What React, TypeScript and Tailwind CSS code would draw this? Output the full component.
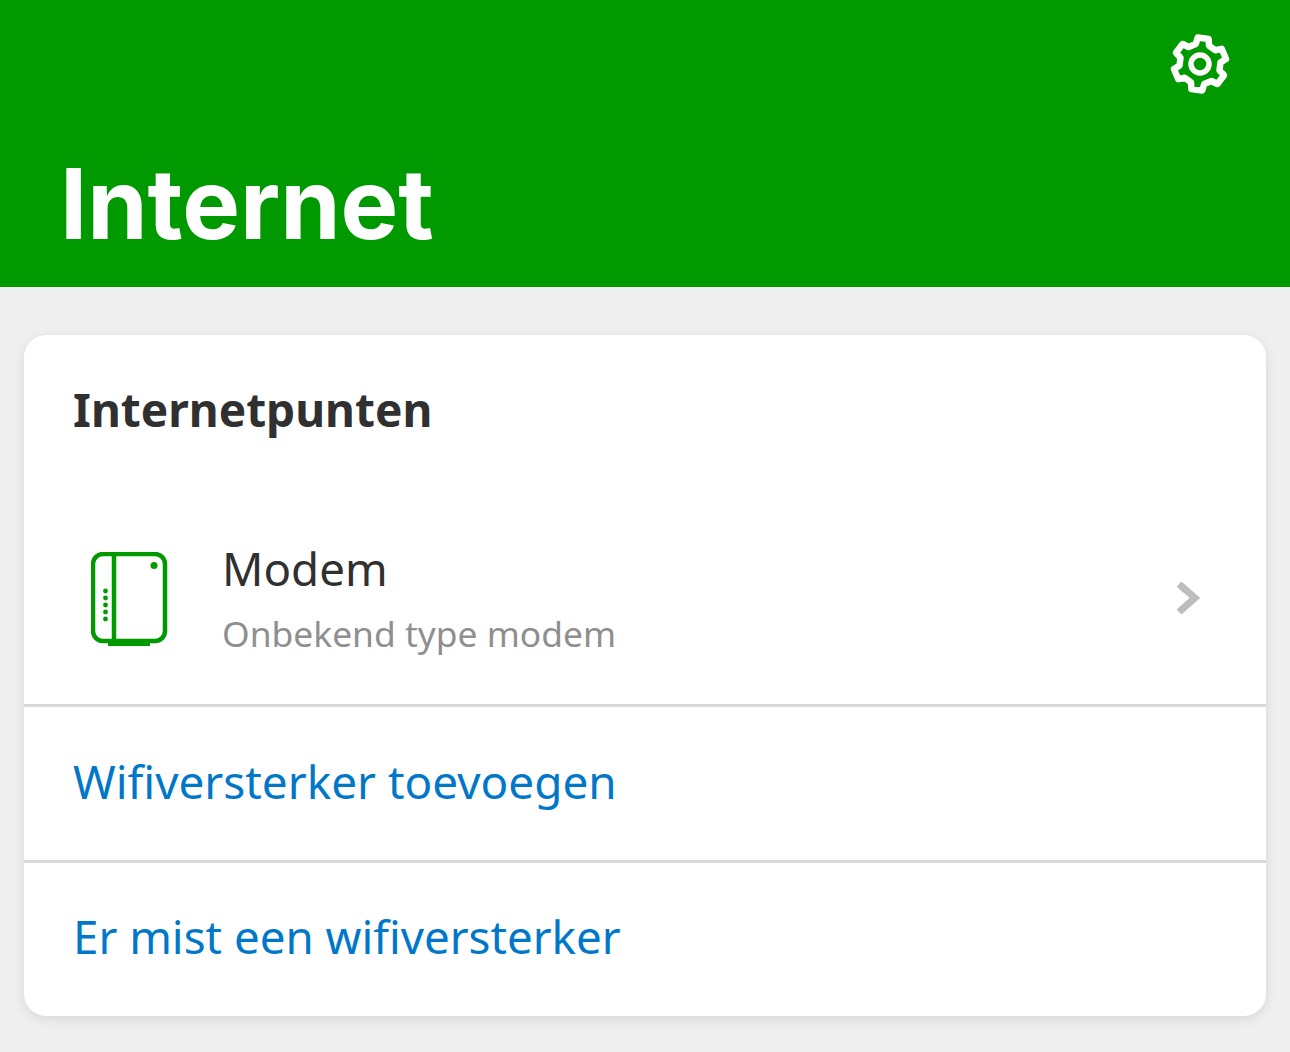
function GearIcon() {
  // 6 teeth, slightly rotated like the original glyph
  const angles = [83, 23, -37, -97, -157, 143]
  const pt = (deg: number, r: number) => {
    const a = (deg * Math.PI) / 180
    return `${(32 + r * Math.cos(a)).toFixed(2)} ${(32 - r * Math.sin(a)).toFixed(2)}`
  }
  const d =
    angles
      .map((a, i) => `${i === 0 ? "M" : "L"}${pt(a + 19, 20.5)} L${pt(a + 12, 26.5)} L${pt(a - 12, 26.5)} L${pt(a - 19, 20.5)}`)
      .join(" ") + " Z"

  return (
    <svg width="64" height="64" viewBox="0 0 64 64" fill="none" stroke="white" strokeLinejoin="round">
      <path d={d} strokeWidth="6.5" />
      <circle cx="32" cy="32" r="9" strokeWidth="5.5" />
    </svg>
  )
}

function ModemIcon() {
  return (
    <svg width="78" height="94" viewBox="0 0 78 94" fill="none" className="mt-[2px] text-[#009900]">
      <rect x="2" y="2" width="72" height="87" rx="10" stroke="currentColor" strokeWidth="4.5" />
      <path d="M23 2v87" stroke="currentColor" strokeWidth="4.5" />
      <path d="M17 90h42v4H17z" fill="currentColor" />
      <circle cx="63" cy="13.5" r="3.5" fill="currentColor" />
      {[39, 46, 53, 60, 67].map((cy) => (
        <circle key={cy} cx="14.5" cy={cy} r="2.4" fill="currentColor" />
      ))}
    </svg>
  )
}

export default function App() {
  return (
    <div className="h-[1052px] overflow-hidden bg-[#efefef] font-['Noto_Sans','Open_Sans',sans-serif]">
      <header className="flex h-[287px] flex-col bg-[#009900] text-white">
        <div className="flex justify-end pt-[32px] pr-[58px]">
          <GearIcon />
        </div>
        <h1 className="mt-[48px] pl-[60px] font-['Inter',sans-serif] text-[97px] leading-[120px] font-bold">Internet</h1>
      </header>

      <section className="mx-6 mt-12 rounded-[22px] bg-white shadow-[0_3px_12px_rgba(0,0,0,0.1)]">
        <h2 className="px-[49px] pt-[44px] text-[46px] leading-[60px] font-bold text-[#303030]">Internetpunten</h2>

        <div className="flex h-[268px] items-center border-b-[3px] border-[#d8d8d8] pt-[53px] pr-[66px] pl-[67px]">
          <ModemIcon />
          <div className="mb-[3px] ml-[53px] flex-1">
            <div className="text-[45.7px] leading-[60px] text-[#303030]">Modem</div>
            <div className="mt-[12px] text-[35.4px] leading-[46px] text-[#8f8f8f]">Onbekend type modem</div>
          </div>
          <svg width="24" height="32" viewBox="0 0 24 32" fill="none" className="mb-[1px]">
            <path d="M3 2l16 14L3 30" stroke="#bdbdbd" strokeWidth="7" />
          </svg>
        </div>

        <div className="flex h-[156px] items-center border-b-[3px] border-[#d8d8d8] px-[49px] pb-[4px] text-[45.9px] text-[#0077c8]">
          Wifiversterker toevoegen
        </div>
        <div className="flex h-[153px] items-center px-[49px] pb-[6px] text-[45.7px] text-[#0077c8]">
          Er mist een wifiversterker
        </div>
      </section>
    </div>
  )
}
